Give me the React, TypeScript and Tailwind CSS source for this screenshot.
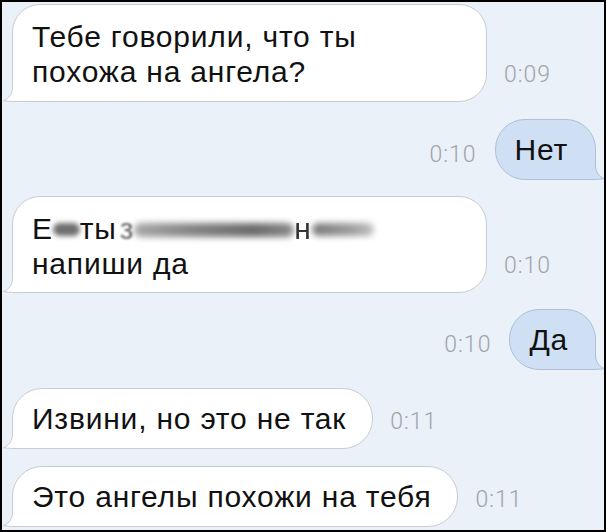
import React from "react";

const WHITE_BORDER = "#c8ccd2";
const BLUE_BORDER = "#aebfd6";

function Tail({ side, fill, stroke }: { side: "left" | "right"; fill: string; stroke: string }) {
  const cls =
    side === "left"
      ? "absolute left-[-11px] bottom-[-1px]"
      : "absolute right-[-11px] bottom-[-1px] -scale-x-100";
  return (
    <svg className={cls} width="26" height="30" viewBox="0 0 26 30">
      <path
        d="M10.5 0 L10.5 15 C10.5 22 7 26.5 1.5 28.6 C 8 29.7 15 29.5 26 29.5 L26 0 Z"
        fill={fill}
      />
      <path
        d="M10.5 0 L10.5 15 C10.5 22 7 26.5 1.5 28.6 C 8 29.7 15 29.5 26 29.5"
        fill="none"
        stroke={stroke}
        strokeWidth="1"
      />
    </svg>
  );
}

function Time({ t, right }: { t: string; right?: boolean }) {
  return (
    <div
      className={
        "font-['Roboto',sans-serif] font-light text-[23px] tracking-[1px] leading-[24px] text-[#a0a4a9] " +
        (right ? "mr-[18px] mb-[13px]" : "ml-[17px] mb-[15px]")
      }
    >
      {t}
    </div>
  );
}

export default function App() {
  return (
    <div className="w-[606px] h-[532px] border-2 border-black bg-[#eaf1f9] overflow-hidden font-['Liberation_Sans',Arial,sans-serif] text-[30px] tracking-[0.8px] text-[#111]">
      <div className="flex flex-col pl-[10px] pt-[2px]">
        {/* Row 1 */}
        <div className="flex items-end">
          <div className="relative w-[475px] h-[98px] bg-white border border-[#c8ccd2] rounded-[28px] rounded-bl-none pl-[19px] pt-[14px] leading-[35px] whitespace-nowrap">
            Тебе говорили, что ты
            <br />
            похожа на ангела?
            <Tail side="left" fill="#ffffff" stroke={WHITE_BORDER} />
          </div>
          <Time t="0:09" />
        </div>

        {/* Row 2 */}
        <div className="flex items-end justify-end mt-[17px] pr-[8px]">
          <Time t="0:10" right />
          <div className="relative h-[61px] flex items-center bg-[#cfe0f4] border border-[#aebfd6] rounded-[30px] rounded-br-none pl-[19px] pr-[27px] leading-[36px]">
            Нет
            <Tail side="right" fill="#cfe0f4" stroke={BLUE_BORDER} />
          </div>
        </div>

        {/* Row 3 */}
        <div className="flex items-end mt-[16px]">
          <div className="relative w-[475px] h-[97px] bg-white border border-[#c8ccd2] rounded-[28px] rounded-bl-none pl-[19px] pt-[14px] leading-[35px]">
            <div className="flex items-center whitespace-nowrap">
              <span>Е</span>
              <span className="inline-block w-[27px] h-[13px] bg-[#6f6f6f] rounded-full blur-[2.5px] translate-y-[1px]" />
              <span>ты</span>
              <span className="ml-[3px] text-[#666] blur-[1px]">з</span>
              <span className="inline-block w-[160px] h-[14px] bg-[linear-gradient(90deg,#a8a8a8,#858585_35%,#6a6a6a_75%,#8a8a8a)] rounded-full blur-[3px] translate-y-[1px]" />
              <span className="text-[#333] blur-[0.6px]">н</span>
              <span className="inline-block w-[62px] h-[13px] bg-[linear-gradient(90deg,#7a7a7a,#9a9a9a_60%,#c0c0c0)] rounded-full blur-[3px] translate-y-[1px]" />
            </div>
            <div>напиши да</div>
            <Tail side="left" fill="#ffffff" stroke={WHITE_BORDER} />
          </div>
          <Time t="0:10" />
        </div>

        {/* Row 4 */}
        <div className="flex items-end justify-end mt-[16px] pr-[8px]">
          <Time t="0:10" right />
          <div className="relative h-[61px] flex items-center bg-[#cfe0f4] border border-[#aebfd6] rounded-[30px] rounded-br-none pl-[19px] pr-[27px] leading-[36px]">
            Да
            <Tail side="right" fill="#cfe0f4" stroke={BLUE_BORDER} />
          </div>
        </div>

        {/* Row 5 */}
        <div className="flex items-end mt-[18px]">
          <div className="relative h-[61px] flex items-center bg-white border border-[#c8ccd2] rounded-[30px] rounded-bl-none pl-[19px] pr-[26px] leading-[36px] whitespace-nowrap">
            Извини, но это не так
            <Tail side="left" fill="#ffffff" stroke={WHITE_BORDER} />
          </div>
          <Time t="0:11" />
        </div>

        {/* Row 6 */}
        <div className="flex items-end mt-[17px]">
          <div className="relative h-[61px] flex items-center bg-white border border-[#c8ccd2] rounded-[30px] rounded-bl-none pl-[19px] pr-[26px] leading-[36px] whitespace-nowrap">
            Это ангелы похожи на тебя
            <Tail side="left" fill="#ffffff" stroke={WHITE_BORDER} />
          </div>
          <Time t="0:11" />
        </div>
      </div>
    </div>
  );
}
